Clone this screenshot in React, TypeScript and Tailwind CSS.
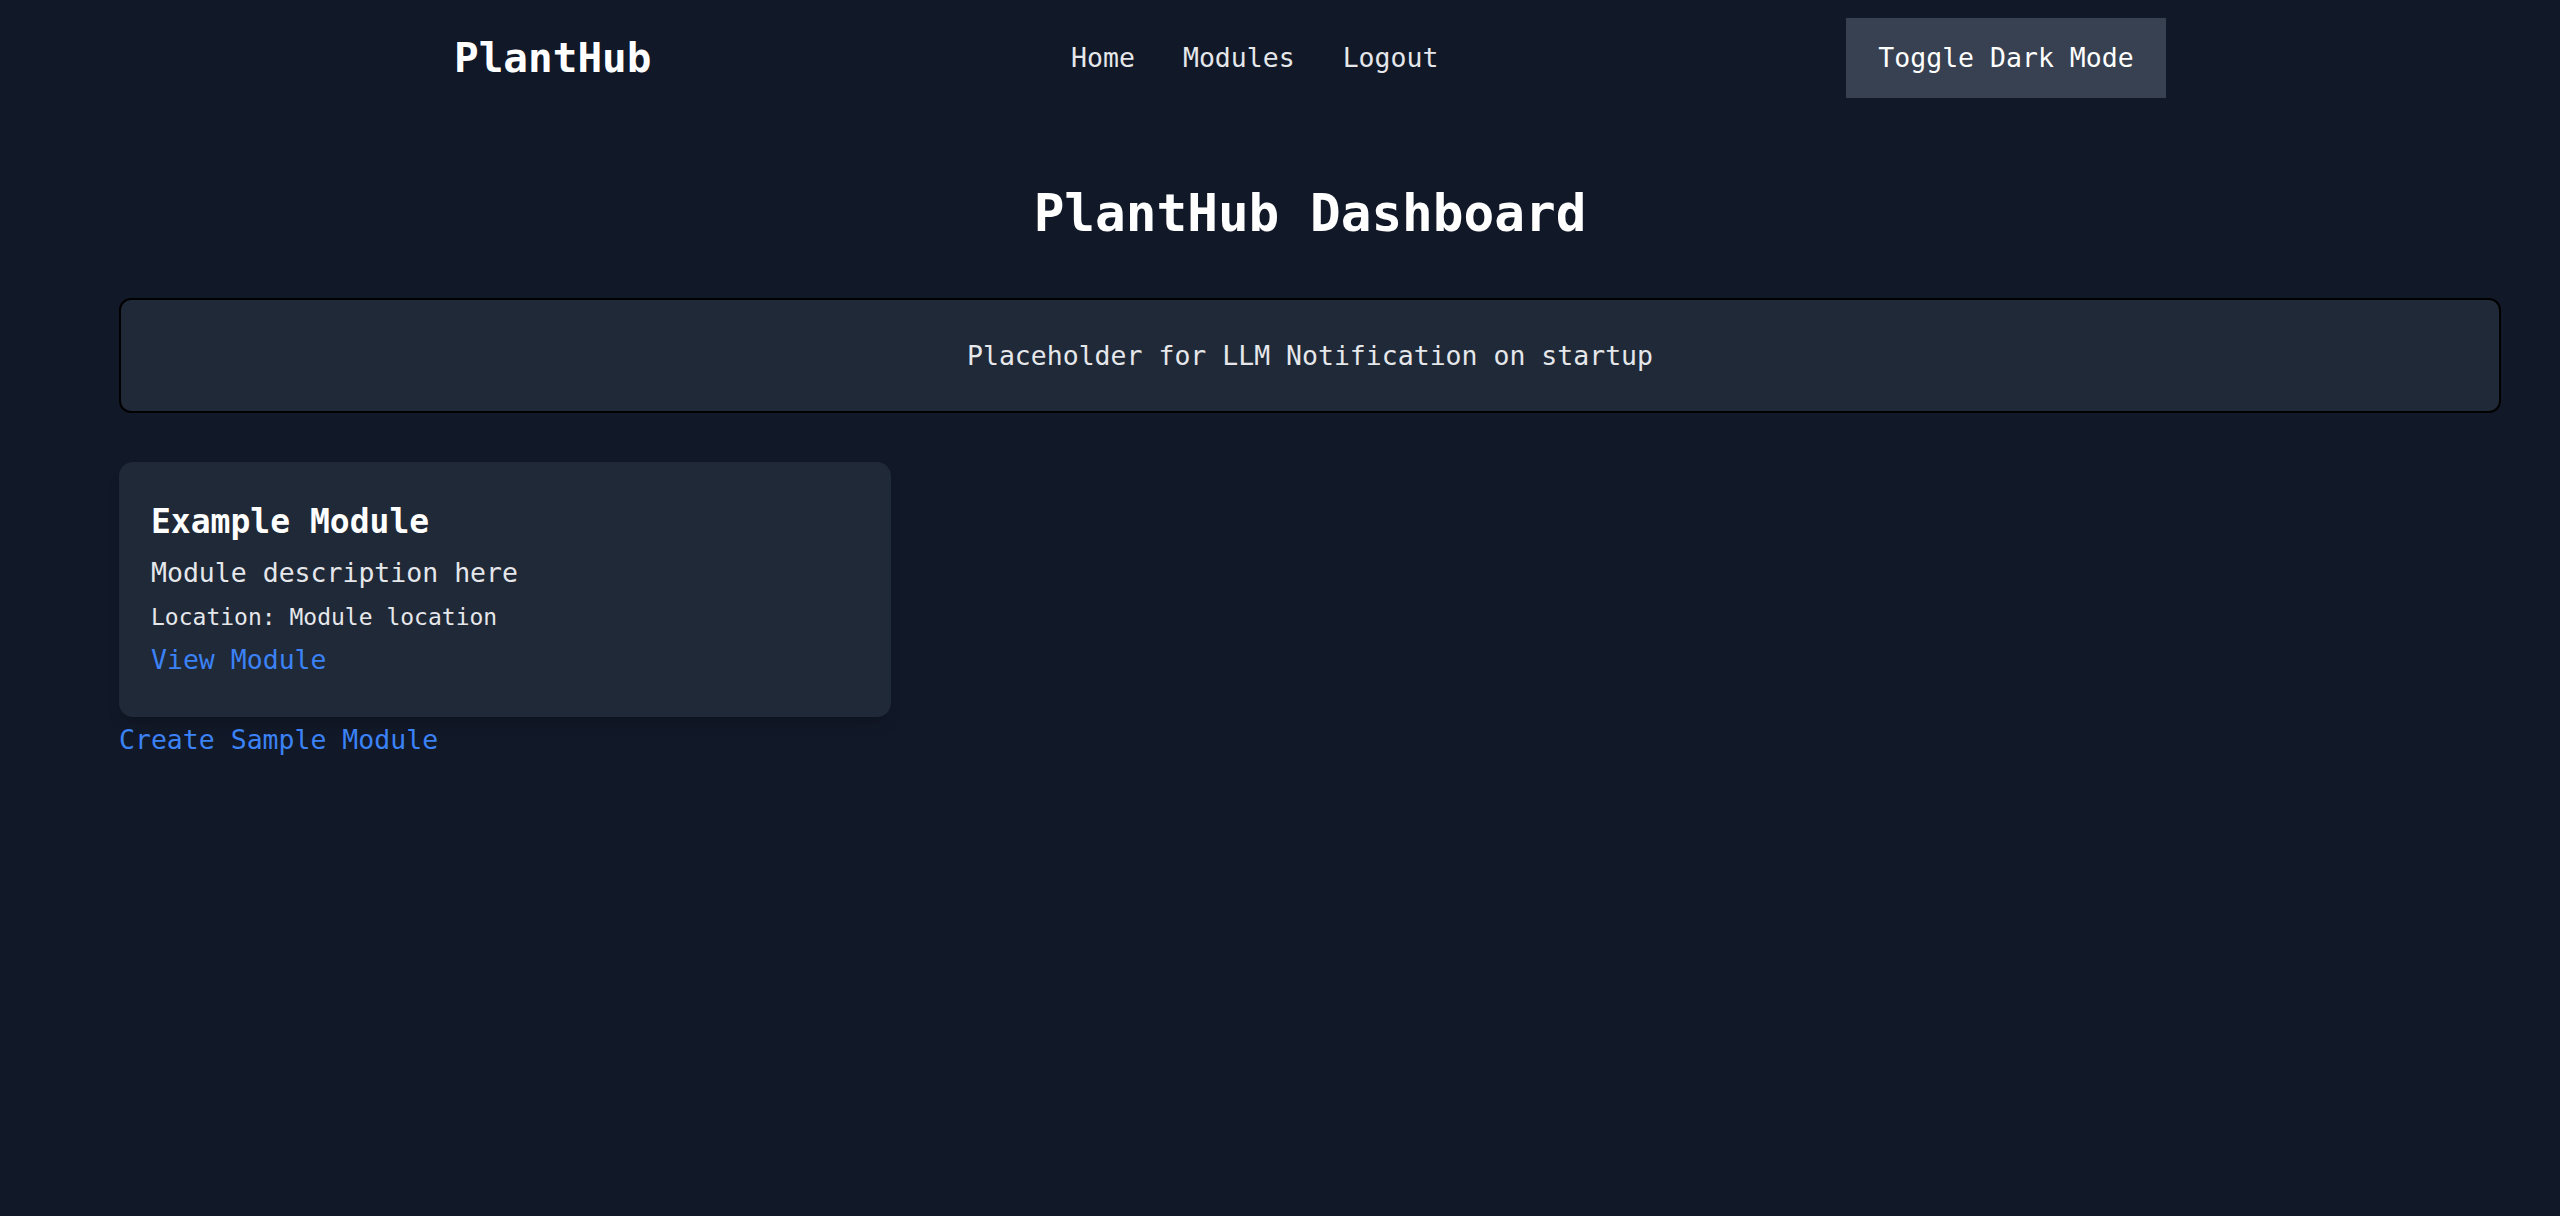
import React from 'react';

const mono = { fontFamily: '"DejaVu Sans Mono", "Liberation Mono", monospace' };

function Navbar() {
  return (
    <nav className="ml-[60px] py-[18px]">
      <div className="max-w-[1712px] mx-auto flex items-center justify-between">
        <span className="text-[41px] font-bold text-white leading-none">PlantHub</span>
        <div className="flex items-center gap-[48px] pl-[12px] text-[26.5px] text-gray-200">
          <a href="#">Home</a>
          <a href="#">Modules</a>
          <a href="#">Logout</a>
        </div>
        <button className="w-[320px] h-[80px] bg-[#374151] text-white text-[26.5px] flex items-center justify-center">
          Toggle Dark Mode
        </button>
      </div>
    </nav>
  );
}

function ModuleCard() {
  return (
    <div className="w-[772px] bg-[#1f2937] rounded-[14px] shadow-lg px-[32px] pt-[38px] pb-[39px]">
      <h3 className="text-[33px] leading-[44px] font-bold text-white">Example Module</h3>
      <p className="mt-[11px] text-[26.5px] leading-[36px] text-gray-200">Module description here</p>
      <p className="mt-[10px] text-[23px] leading-[32px] text-gray-200">Location: Module location</p>
      <a href="#" className="block mt-[9px] text-[26.5px] leading-[36px] text-[#3b82f6]">View Module</a>
    </div>
  );
}

export default function App() {
  return (
    <div className="min-h-screen bg-[#111827]" style={mono}>
      <Navbar />
      <main className="ml-[60px] w-[2500px] px-[59px]">
        <h1 className="mt-[68px] text-center text-[51px] leading-[60px] font-bold text-white">
          PlantHub Dashboard
        </h1>
        <div className="mt-[54px] h-[115px] bg-[#1f2937] border-2 border-black rounded-xl flex items-center justify-center">
          <p className="text-[26.5px] text-gray-200">Placeholder for LLM Notification on startup</p>
        </div>
        <div className="mt-[49px]">
          <ModuleCard />
        </div>
        <a href="#" className="block mt-[5px] text-[26.5px] leading-[36px] text-[#3b82f6]">Create Sample Module</a>
      </main>
    </div>
  );
}
